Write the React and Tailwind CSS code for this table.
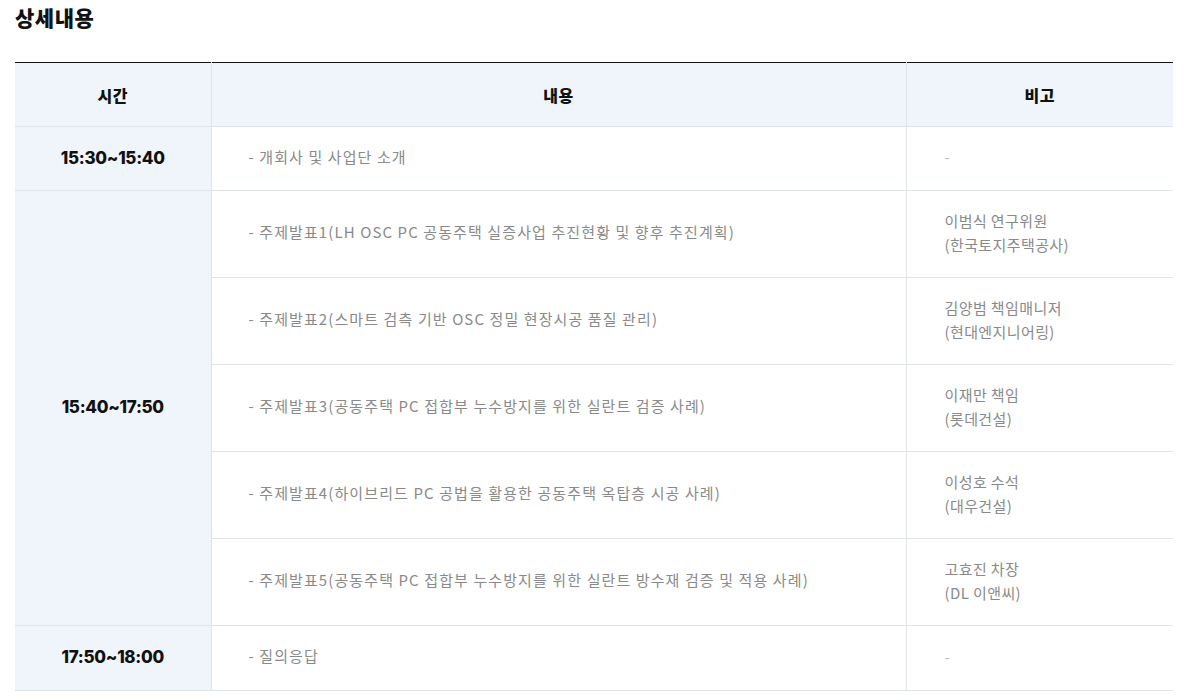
import React from "react";

const rows = [
  { time: "15:30~15:40", items: [{ text: "- 개회사 및 사업단 소개", note: ["-"] }], h: "h-[64px]" },
  {
    time: "15:40~17:50",
    h: "h-[87px]",
    items: [
      {
        text: "- 주제발표1(LH OSC PC 공동주택 실증사업 추진현황 및 향후 추진계획)",
        note: ["이범식 연구위원", "(한국토지주택공사)"],
      },
      {
        text: "- 주제발표2(스마트 검측 기반 OSC 정밀 현장시공 품질 관리)",
        note: ["김양범 책임매니저", "(현대엔지니어링)"],
      },
      {
        text: "- 주제발표3(공동주택 PC 접합부 누수방지를 위한 실란트 검증 사례)",
        note: ["이재만 책임", "(롯데건설)"],
      },
      {
        text: "- 주제발표4(하이브리드 PC 공법을 활용한 공동주택 옥탑층 시공 사례)",
        note: ["이성호 수석", "(대우건설)"],
      },
      {
        text: "- 주제발표5(공동주택 PC 접합부 누수방지를 위한 실란트 방수재 검증 및 적용 사례)",
        note: ["고효진 차장", "(DL 이앤씨)"],
      },
    ],
  },
  { time: "17:50~18:00", items: [{ text: "- 질의응답", note: ["-"] }], h: "h-[65px]" },
];

const App = () => {
  return (
    <div className="w-[1200px] h-[700px] bg-white font-['Noto_Sans_CJK_KR',sans-serif] overflow-hidden">
      <h2 className="pl-[15px] pt-[3px] text-[21px] font-black text-[#111] leading-[28px] tracking-[0.5px]">
        상세내용
      </h2>

      <table className="ml-[15px] mt-[31px] w-[1158px] border-collapse table-fixed border-t border-t-[#111]">
        <colgroup>
          <col className="w-[196px]" />
          <col className="w-[695px]" />
          <col className="w-[267px]" />
        </colgroup>
        <thead>
          <tr className="h-[64px] bg-[#f0f4fb] border-b border-[#dfe3ea]">
            <th className="text-[16px] font-black text-[#111] border-r border-[#dfe3ea] tracking-[0.5px]">시간</th>
            <th className="text-[16px] font-black text-[#111] border-r border-[#dfe3ea] tracking-[0.5px]">내용</th>
            <th className="text-[16px] font-black text-[#111] tracking-[0.5px]">비고</th>
          </tr>
        </thead>
        <tbody>
          {rows.map((row) =>
            row.items.map((item, i) => (
              <tr key={row.time + i} className={`${row.h} border-b border-[#dfe3ea]`}>
                {i === 0 && (
                  <td
                    rowSpan={row.items.length}
                    className="bg-[#f0f4fb] text-center text-[17px] font-extrabold text-[#111] border-r border-[#dfe3ea] font-['Inter','Noto_Sans_CJK_KR',sans-serif] tracking-[-0.3px]"
                  >
                    {row.time}
                  </td>
                )}
                <td className="pl-[37px] pb-[3px] text-[15px] tracking-[1.1px] text-[#8a8a8a] border-r border-[#dfe3ea]">
                  {item.text}
                </td>
                <td className="pl-[38px] pb-[3px] text-[15px] tracking-[0.4px] leading-[24px] text-[#8a8a8a]">
                  {item.note.map((n) => (
                    <div key={n} className={n === "-" ? "text-[#bbb]" : ""}>
                      {n}
                    </div>
                  ))}
                </td>
              </tr>
            ))
          )}
        </tbody>
      </table>
    </div>
  );
};

export default App;
